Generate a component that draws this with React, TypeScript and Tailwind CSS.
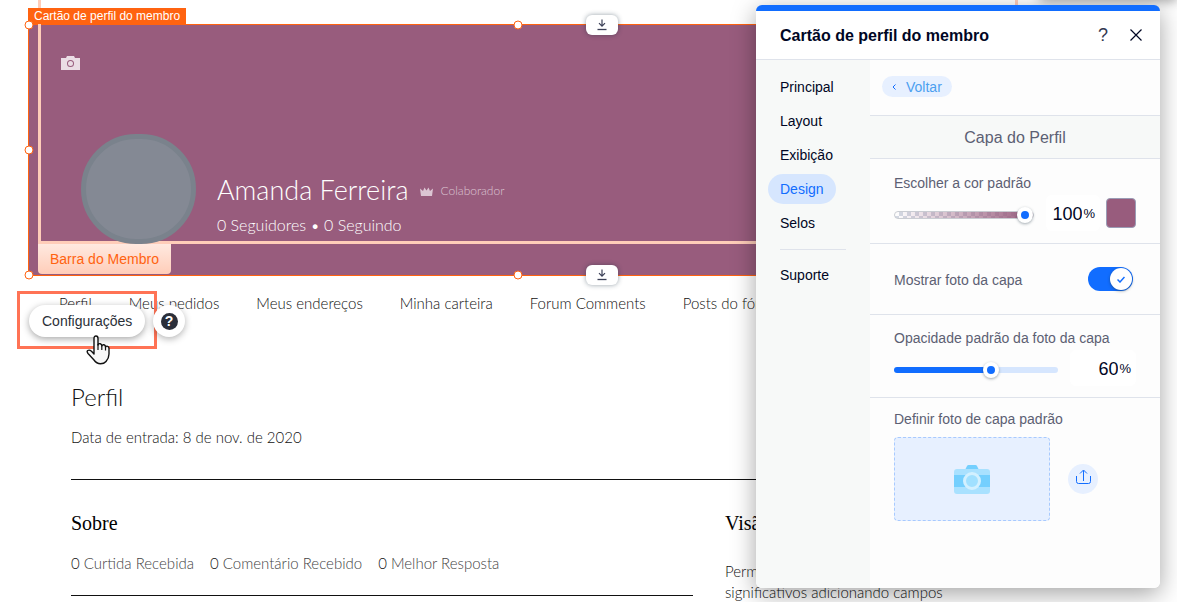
import { useState } from "react"
import type { CSSProperties } from "react"

const navItems = ["Perfil", "Meus pedidos", "Meus endereços", "Minha carteira", "Forum Comments", "Posts do fórum"]

const stats = [
  { count: 0, label: "Curtida Recebida" },
  { count: 0, label: "Comentário Recebido" },
  { count: 0, label: "Melhor Resposta" },
]

const tabs = ["Principal", "Layout", "Exibição", "Design", "Selos"]

const handles = [
  "left-0 top-0",
  "left-1/2 top-0",
  "left-0 top-1/2",
  "left-0 top-full",
  "left-1/2 top-full",
]

function StretchButton({ className }: { className: string }) {
  return (
    <button
      aria-label="Esticar"
      className={`absolute left-[573px] flex h-5 w-8 -translate-x-1/2 -translate-y-1/2 items-center justify-center rounded-md bg-white shadow-[0_0_5px_rgba(22,45,61,0.45)] ${className}`}
    >
      <svg width="10" height="12" viewBox="0 0 10 12" fill="none" stroke="#3b4057" aria-hidden="true">
        <path d="M5 0.500V7M2 4.200L5 7.200L8 4.200" strokeWidth="1.200" />
        <path d="M0.500 10.500H9.500" strokeWidth="1.300" />
      </svg>
    </button>
  )
}

function ProfileCard() {
  return (
    <section className="relative mr-[169px] ml-7 border border-[#ff6310] bg-[#985c7d] pt-[31px] pb-[31px] pl-8">
      <svg width="19" height="14" viewBox="0 0 19 14" className="block" aria-hidden="true">
        <path
          fillRule="evenodd"
          fill="#ebdde5"
          d="M0 2H5L6 0H13L14 2H19V14H0ZM9.500 4A3.500 3.500 0 1 0 9.500 11A3.500 3.500 0 1 0 9.500 4ZM9.500 5A2.500 2.500 0 1 1 9.500 10A2.500 2.500 0 1 1 9.500 5Z"
        />
      </svg>
      <div className="mt-16 flex pl-5">
        <div className="relative z-20 h-[110px] w-[115px] shrink-0 rounded-full border-[5px] border-[#7a828c] bg-[#848994]" />
        <div className="pt-[38px] pl-[21px] font-[Lato,sans-serif] text-white">
          <div className="flex items-center gap-3">
            <h2 className="text-[27px] leading-9 font-light">Amanda Ferreira</h2>
            <span className="flex items-center gap-[7px] pt-[2px] text-xs font-light text-[#dcc5d3]">
              <svg width="13" height="9" viewBox="0 0 13 9" aria-hidden="true">
                <path d="M0 1.500L3 4L4.500 0.500L6.500 3.500L8.500 0.500L10 4L13 1.500L12 9H1Z" fill="#dcc5d3" />
              </svg>
              Colaborador
            </span>
          </div>
          <p className="mt-[5px] text-base leading-6 font-light">0 Seguidores • 0 Seguindo</p>
        </div>
      </div>
      <span className="absolute -top-[17px] -left-px z-20 flex h-4 items-center bg-[#ff6310] px-[6px] text-xs whitespace-nowrap text-white">
        Cartão de perfil do membro
      </span>
      {handles.map((pos) => (
        <span
          key={pos}
          className={`absolute z-20 h-[9px] w-[9px] -translate-x-1/2 -translate-y-1/2 rounded-full border border-[#ff6310] bg-white ${pos}`}
        />
      ))}
      <StretchButton className="top-0" />
      <StretchButton className="top-full" />
    </section>
  )
}

// Outline of the parent element, drawn over the card
function ParentGuide() {
  return (
    <div className="pointer-events-none absolute top-0 right-[159px] left-[38px] z-10 h-[244px] border-x-[3px] border-b-[3px] border-[#ffcdb9]">
      <span className="absolute top-full -left-[3px] mt-[3px] flex h-[30px] items-center rounded-b-sm bg-gradient-to-b from-[#ffe9e0] to-[#ffcdb9] px-3 text-sm whitespace-nowrap text-[#ff6310]">
        Barra do Membro
      </span>
    </div>
  )
}

function FloatingActions() {
  return (
    <div className="absolute top-[291px] left-[17px] z-20 flex h-[58px] items-center border-[3px] border-[#ff7355] px-[9px] pt-[2px]">
      <button className="h-8 rounded-full bg-white px-[13px] text-sm text-[#2b3038] shadow-[0_2px_7px_rgba(0,0,0,0.35)]">
        Configurações
      </button>
      <button
        aria-label="Ajuda"
        className="absolute left-[133px] -z-10 flex h-8 w-8 items-center justify-center rounded-full bg-white shadow-[0_2px_7px_rgba(0,0,0,0.3)]"
      >
        <span className="flex h-[17px] w-[17px] items-center justify-center rounded-full bg-[#2b2f3a] text-sm font-bold text-white">
          ?
        </span>
      </button>
      <svg width="24" height="30" viewBox="0 0 24 30" className="absolute top-[41px] left-[66px]" aria-hidden="true">
        <path
          d="M8 19V3.500Q8 1 10 1Q12 1 12 3.500V10Q12.500 8.300 14.300 8.700Q15.800 9 15.800 11Q16.500 9.400 18 9.800Q19.500 10.200 19.500 12Q20.500 10.800 21.700 11.300Q23 11.800 23 13.500V19Q23 23 20 26.500Q18 28.800 14.500 28.800Q10.500 28.800 8 25L2 18.500Q0.500 16.500 1.700 15.500Q3.500 14.500 5.500 16.300Z"
          fill="#f7f7f7"
          stroke="#111"
          strokeWidth="1.400"
          strokeLinejoin="round"
        />
        <path d="M12 9V15M15.800 11V15M19.500 12V15.500" stroke="#111" strokeWidth="1.200" fill="none" />
      </svg>
    </div>
  )
}

function ProfilePage() {
  return (
    <div className="font-[Lato,sans-serif] font-light text-[#111]">
      <nav className="flex gap-[37px] pt-[15px] pl-[59px] text-[15px] leading-6 whitespace-nowrap">
        {navItems.map((item) => (
          <a key={item} href="#">
            {item}
          </a>
        ))}
      </nav>
      <main className="mr-[169px] ml-[71px]">
        <div className="border-b border-[#111] pt-[64px] pb-[30px]">
          <h1 className="text-2xl leading-9">Perfil</h1>
          <p className="mt-[10px] text-[15px] leading-6">Data de entrada: 8 de nov. de 2020</p>
        </div>
        <div className="flex items-start gap-8 pt-[31px]">
          <div className="w-[622px] shrink-0 border-b border-[#111] pb-5">
            <h2 className="font-['Liberation_Serif',serif] text-xl leading-6 font-normal text-black">Sobre</h2>
            <div className="mt-4 flex gap-4 text-[15px] leading-6 text-[#444]">
              {stats.map((s) => (
                <p key={s.label}>
                  <span className="text-[#111]">{s.count}</span> {s.label}
                </p>
              ))}
            </div>
          </div>
          <div>
            <h2 className="font-['Liberation_Serif',serif] text-xl leading-6 font-normal text-black">Visão</h2>
            <p className="mt-[26px] text-[15px] leading-[21px] whitespace-nowrap">
              Permita
              <br />
              significativos adicionando campos
            </p>
          </div>
        </div>
      </main>
    </div>
  )
}

const thumb =
  "[&::-webkit-slider-thumb]:h-4 [&::-webkit-slider-thumb]:w-4 [&::-webkit-slider-thumb]:appearance-none [&::-webkit-slider-thumb]:rounded-full [&::-webkit-slider-thumb]:border-4 [&::-webkit-slider-thumb]:border-solid [&::-webkit-slider-thumb]:border-white [&::-webkit-slider-thumb]:bg-[#116dff] [&::-webkit-slider-thumb]:shadow-[0_1px_3px_rgba(22,45,61,0.4)]"

const colorTrack =
  "[&::-webkit-slider-runnable-track]:h-2 [&::-webkit-slider-runnable-track]:rounded-full [&::-webkit-slider-runnable-track]:border [&::-webkit-slider-runnable-track]:border-[#c9ccd2] [&::-webkit-slider-runnable-track]:[background:linear-gradient(to_right,transparent,#985c7d),repeating-conic-gradient(#d5dbe4_0_25%,#ffffff_0_50%)_0_0/8px_8px] [&::-webkit-slider-thumb]:-mt-[5px]"

const plainTrack =
  "[&::-webkit-slider-runnable-track]:h-[6px] [&::-webkit-slider-runnable-track]:rounded-full [&::-webkit-slider-runnable-track]:[background:linear-gradient(to_right,#116dff_var(--fill),#d6e6fe_var(--fill))] [&::-webkit-slider-thumb]:-mt-[5px]"

interface PercentRowProps {
  id: string
  value: number
  onChange: (v: number) => void
  trackClass: string
  boxClass: string
}

function PercentRow({ id, value, onChange, trackClass, boxClass }: PercentRowProps) {
  return (
    <>
      <input
        id={id}
        type="range"
        min={0}
        max={100}
        value={value}
        onChange={(e) => onChange(Number(e.target.value))}
        style={{ "--fill": `${value}%` } as CSSProperties}
        className={`mt-1 h-4 min-w-0 flex-1 appearance-none bg-transparent ${thumb} ${trackClass}`}
      />
      <div className={`ml-3 flex h-9 items-center justify-end rounded-md bg-white pt-px pr-[5px] ${boxClass}`}>
        <input
          aria-label="Porcentagem"
          value={value}
          onChange={(e) => onChange(Number(e.target.value) || 0)}
          className="w-0 flex-1 text-right text-lg text-[#000624] outline-none"
        />
        <span className="pt-[2px] pl-px text-[13px] text-[#000624]">%</span>
      </div>
    </>
  )
}

function SettingsPanel() {
  const [active, setActive] = useState("Design")
  const [colorOpacity, setColorOpacity] = useState(100)
  const [photoOpacity, setPhotoOpacity] = useState(60)
  const [showPhoto, setShowPhoto] = useState(true)

  return (
    <aside className="absolute top-[5px] right-[17px] z-30 w-[404px] overflow-hidden rounded-md border-t-[6px] border-[#116dff] bg-white shadow-[0_6px_24px_rgba(0,0,0,0.36)]">
      <header className="flex h-[49px] items-center border-b border-[#dfe3eb] pr-[18px] pl-6 text-[#000624]">
        <h2 className="flex-1 pt-px text-base font-bold">Cartão de perfil do membro</h2>
        <button aria-label="Ajuda" className="mr-[22px] text-lg text-[#33384f]">
          ?
        </button>
        <button aria-label="Fechar">
          <svg width="12" height="12" viewBox="0 0 12 12" stroke="#000624" strokeWidth="1.200" aria-hidden="true">
            <path d="M0.500 0.500L11.500 11.500M11.500 0.500L0.500 11.500" />
          </svg>
        </button>
      </header>
      <div className="flex text-sm">
        <nav className="flex w-[114px] shrink-0 flex-col items-start gap-1 bg-[#f7f9f8] pt-3 pl-3">
          {tabs.map((tab) => (
            <button
              key={tab}
              onClick={() => setActive(tab)}
              className={`h-[30px] rounded-full px-3 ${
                active === tab ? "bg-[#d6e6fe] text-[#116dff]" : "text-[#000624]"
              }`}
            >
              {tab}
            </button>
          ))}
          <hr className="mt-[7px] mb-[6px] ml-3 w-[66px] border-[#dfe3eb]" />
          <button className="h-[30px] px-3 text-[#000624]">Suporte</button>
        </nav>
        <div className="min-w-0 flex-1 bg-[#fdfdfd] text-[#5c6073]">
          <div className="border-b border-[#dfe3eb] px-3 pt-4 pb-[18px]">
            <button className="flex h-[21px] items-center gap-[10px] rounded-full bg-[#e7f0ff] px-[10px] text-[#4c9ff0]">
              <svg width="4" height="6" viewBox="0 0 4 6" fill="none" stroke="#116dff" aria-hidden="true">
                <path d="M3.500 0.500L1 3L3.500 5.500" />
              </svg>
              Voltar
            </button>
          </div>
          <h3 className="flex h-[43px] items-center justify-center border-b border-[#dfe3eb] bg-[#f7f9f8] pt-[2px] text-base">
            Capa do Perfil
          </h3>
          <div className="border-b border-[#dfe3eb] px-6 pt-[14px] pb-3">
            <label htmlFor="color-opacity" className="block leading-5">
              Escolher a cor padrão
            </label>
            <div className="mt-[2px] flex items-center">
              <PercentRow
                id="color-opacity"
                value={colorOpacity}
                onChange={setColorOpacity}
                trackClass={colorTrack}
                boxClass="w-[54px]"
              />
              <button
                aria-label="Cor padrão"
                className="ml-[6px] h-[30px] w-[30px] rounded-sm border border-[#9a9cb5] bg-[#985c7d]"
              />
            </div>
          </div>
          <div className="flex h-[71px] items-center justify-between border-b border-[#dfe3eb] pr-[27px] pl-6">
            <label htmlFor="show-photo" className="pt-[2px]">
              Mostrar foto da capa
            </label>
            <span className="relative flex">
              <input
                id="show-photo"
                type="checkbox"
                role="switch"
                checked={showPhoto}
                onChange={(e) => setShowPhoto(e.target.checked)}
                className="peer h-6 w-[45px] appearance-none rounded-full bg-[#b6c1cd] checked:bg-[#116dff]"
              />
              <span className="pointer-events-none absolute top-px left-px flex h-[22px] w-[22px] items-center justify-center rounded-full bg-white shadow-[0_1px_3px_rgba(22,45,61,0.5)] peer-checked:left-[22px]">
                <svg width="8" height="7" viewBox="0 0 8 7" fill="none" stroke="#116dff" aria-hidden="true">
                  <path d="M0.500 3.500L3 6L7.500 1" strokeWidth="1.500" />
                </svg>
              </span>
            </span>
          </div>
          <div className="border-b border-[#dfe3eb] px-6 pt-[13px] pb-[11px]">
            <label htmlFor="photo-opacity" className="block leading-5">
              Opacidade padrão da foto da capa
            </label>
            <div className="mt-[2px] flex items-center">
              <PercentRow
                id="photo-opacity"
                value={photoOpacity}
                onChange={setPhotoOpacity}
                trackClass={plainTrack}
                boxClass="w-[66px]"
              />
            </div>
          </div>
          <div className="px-6 pt-[11px] pb-[67px]">
            <p className="leading-5">Definir foto de capa padrão</p>
            <div className="mt-2 flex items-center gap-[18px]">
              <button
                aria-label="Escolher foto"
                className="flex h-[84px] w-[156px] items-center justify-center rounded border border-dashed border-[#a8caff] bg-[#e7f0ff]"
              >
                <svg width="36" height="29" viewBox="0 0 36 29" aria-hidden="true">
                  <path d="M11 5L13 1Q13.500 0 14.500 0H21.500Q22.500 0 23 1L25 5Z" fill="#74cffe" />
                  <rect y="4" width="36" height="25" rx="3" fill="#a9e1ff" />
                  <path d="M0 10H36V22H0Z" fill="#74cffe" />
                  <circle cx="18" cy="16" r="7.500" fill="#a0e0ff" stroke="#d2f0ff" strokeWidth="3" />
                </svg>
              </button>
              <button
                aria-label="Enviar foto"
                className="flex h-[30px] w-[30px] items-center justify-center rounded-full bg-[#e7f0ff]"
              >
                <svg width="16" height="16" viewBox="0 0 16 16" fill="none" stroke="#116dff" className="mb-1" aria-hidden="true">
                  <path d="M8.500 12V1.500M5 4.500L8.500 1L12 4.500" />
                  <path d="M1.500 7V12.500Q1.500 14.500 3.500 14.500H13.500Q15.500 14.500 15.500 12.500V7" />
                </svg>
              </button>
            </div>
          </div>
        </div>
      </div>
    </aside>
  )
}

export default function App() {
  return (
    <div className="relative min-h-screen overflow-hidden bg-white pt-6 font-['Liberation_Sans',Arial,sans-serif]">
      <ProfileCard />
      <ParentGuide />
      <ProfilePage />
      <FloatingActions />
      <div className="absolute -top-2 right-0 h-2 w-[137px] shadow-[0_0_12px_rgba(0,0,0,0.5)]" />
      <SettingsPanel />
    </div>
  )
}
